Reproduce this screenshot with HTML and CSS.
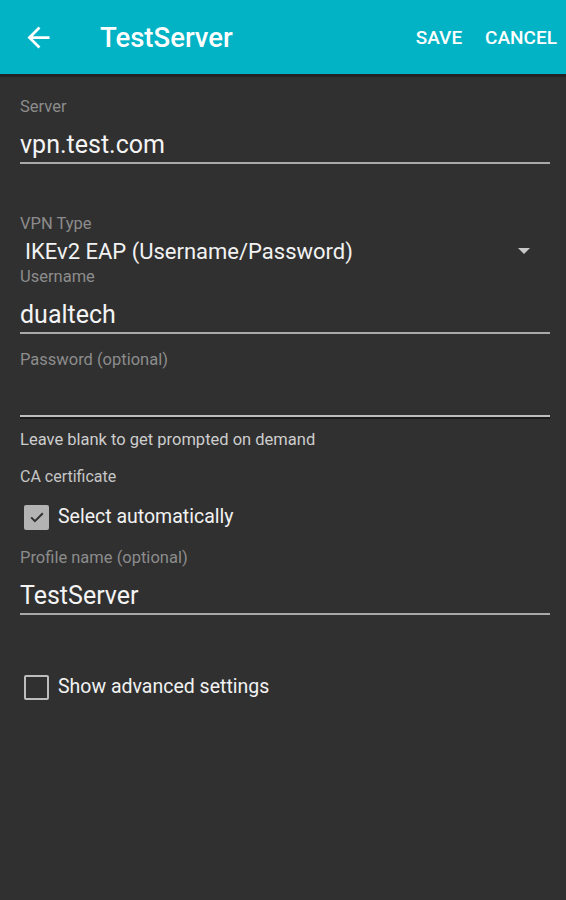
FILE: index.html
```html
<!DOCTYPE html>
<html>
<head>
<meta charset="utf-8">
<link rel="stylesheet" href="styles.css">
</head>
<body>
<header class="bar">
  <svg class="back" viewBox="0 0 24 24" width="33" height="33"><path fill="#fff" d="M20 11H7.83l5.59-5.59L12 4l-8 8 8 8 1.41-1.41L7.83 13H20v-2z"/></svg>
  <div class="title">TestServer</div>
  <div class="actions"><span>SAVE</span><span>CANCEL</span></div>
</header>
<main class="form">
  <div class="label l-server">Server</div>
  <div class="value">vpn.test.com</div>
  <div class="line"></div>

  <div class="label l-type">VPN Type</div>
  <div class="select">
    <span class="sel-text">IKEv2 EAP (Username/Password)</span>
    <span class="caret"></span>
  </div>

  <div class="label l-user">Username</div>
  <div class="value">dualtech</div>
  <div class="line"></div>

  <div class="label l-pass">Password (optional)</div>
  <div class="value"></div>
  <div class="line focus"></div>

  <div class="hint">Leave blank to get prompted on demand</div>
  <div class="section">CA certificate</div>
  <div class="check-row r-auto">
    <span class="box checked"><svg viewBox="0 0 24 24" width="20" height="20"><path fill="none" stroke="#303030" stroke-width="2.4" d="M5 12.5l4.5 4.5L19 7.5"/></svg></span>
    <span class="check-text">Select automatically</span>
  </div>

  <div class="label l-profile">Profile name (optional)</div>
  <div class="value v-profile">TestServer</div>
  <div class="line"></div>

  <div class="check-row r-adv">
    <span class="box"></span>
    <span class="check-text">Show advanced settings</span>
  </div>
</main>
</body>
</html>
```
FILE: styles.css
```css
* { box-sizing: border-box; }
html, body { margin: 0; padding: 0; }
body {
  width: 566px;
  height: 900px;
  background: #303030;
  font-family: Roboto, "Noto Sans", sans-serif;
  color: #f2f2f2;
  overflow: hidden;
}
.bar {
  height: 77px;
  background: #02b3c5;
  border-bottom: 3px solid #222;
  display: flex;
  align-items: center;
  color: #fff;
}
.back {
  margin-left: 22px;
  flex: none;
}
.title {
  margin-left: 45px;
  font-size: 27.5px;
  font-weight: 500;
  flex: 1;
}
.actions {
  display: flex;
  gap: 23px;
  margin-right: 9px;
  font-size: 19px;
  font-weight: 500;
}
.form {
  padding: 20px 16px 0 20px;
}
.label {
  font-size: 16.5px;
  line-height: 20px;
  color: #8c8c8c;
}
.value {
  font-size: 25px;
  line-height: 30px;
  height: 30px;
  margin-top: 13px;
  color: #f4f4f4;
}
.line {
  height: 2px;
  margin-top: 2px;
  background: #a9a9a9;
}
.line.focus {
  height: 4px;
  background: linear-gradient(#bdbdbd 0 2px, #1c1c1c 2px 4px);
}
.l-type { margin-top: 50px; }
.select {
  display: flex;
  align-items: center;
  margin-top: 5px;
  padding-left: 5px;
  height: 26px;
}
.sel-text {
  flex: 1;
  font-size: 22px;
  line-height: 26px;
}
.caret {
  width: 0;
  height: 0;
  border-left: 6px solid transparent;
  border-right: 6px solid transparent;
  border-top: 6px solid #c9c9c9;
  margin-right: 20px;
  margin-top: -2px;
}
.l-user { margin-top: 2px; }
.l-pass { margin-top: 16px; }
.hint {
  margin-top: 12px;
  font-size: 16.5px;
  line-height: 18px;
  color: #cdcdcd;
}
.section {
  margin-top: 19px;
  font-size: 16px;
  line-height: 18px;
  color: #c6c6c6;
}
.check-row {
  display: flex;
  align-items: center;
  height: 26px;
  padding-left: 4px;
}
.r-auto { margin-top: 18px; }
.r-adv { margin-top: 59px; }
.box {
  width: 25px;
  height: 25px;
  border: 2.5px solid #bdbdbd;
  border-radius: 2px;
  display: flex;
  align-items: center;
  justify-content: center;
  flex: none;
}
.box.checked {
  background: #b3b3b3;
  border-color: #b3b3b3;
}
.check-text {
  margin-left: 9px;
  font-size: 19.5px;
  line-height: 24px;
  color: #f2f2f2;
}
.l-profile { margin-top: 18px; }
.v-profile { margin-top: 13px; }
```
